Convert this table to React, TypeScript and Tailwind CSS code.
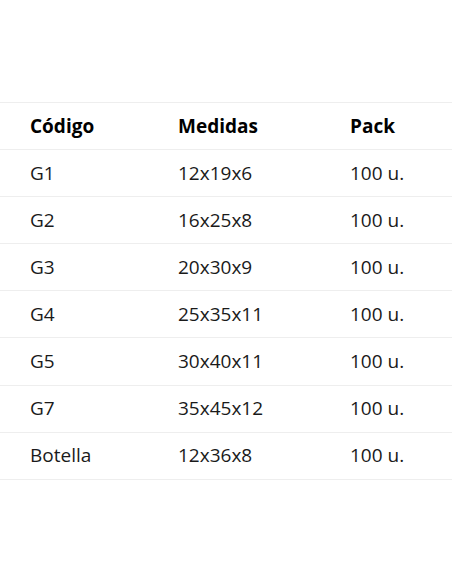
const rows = [
  ['G1', '12x19x6', '100 u.'],
  ['G2', '16x25x8', '100 u.'],
  ['G3', '20x30x9', '100 u.'],
  ['G4', '25x35x11', '100 u.'],
  ['G5', '30x40x11', '100 u.'],
  ['G7', '35x45x12', '100 u.'],
  ['Botella', '12x36x8', '100 u.'],
];

export default function App() {
  return (
    <div className="min-h-[584px] bg-white pt-[102px] font-['Open_Sans',sans-serif] text-[19px] text-[#1a1a1a]">
      <table className="w-full border-collapse">
        <thead>
          <tr className="border-y border-[#eeeeee]">
            <th className="h-[47.1px] w-[178px] pl-[30px] text-left font-bold text-black">Código</th>
            <th className="w-[172px] text-left font-bold text-black">Medidas</th>
            <th className="text-left font-bold text-black">Pack</th>
          </tr>
        </thead>
        <tbody>
          {rows.map((r) => (
            <tr key={r[0]} className="border-b border-[#eeeeee]">
              <td className="h-[47.1px] pl-[30px]">{r[0]}</td>
              <td>{r[1]}</td>
              <td>{r[2]}</td>
            </tr>
          ))}
        </tbody>
      </table>
    </div>
  );
}
